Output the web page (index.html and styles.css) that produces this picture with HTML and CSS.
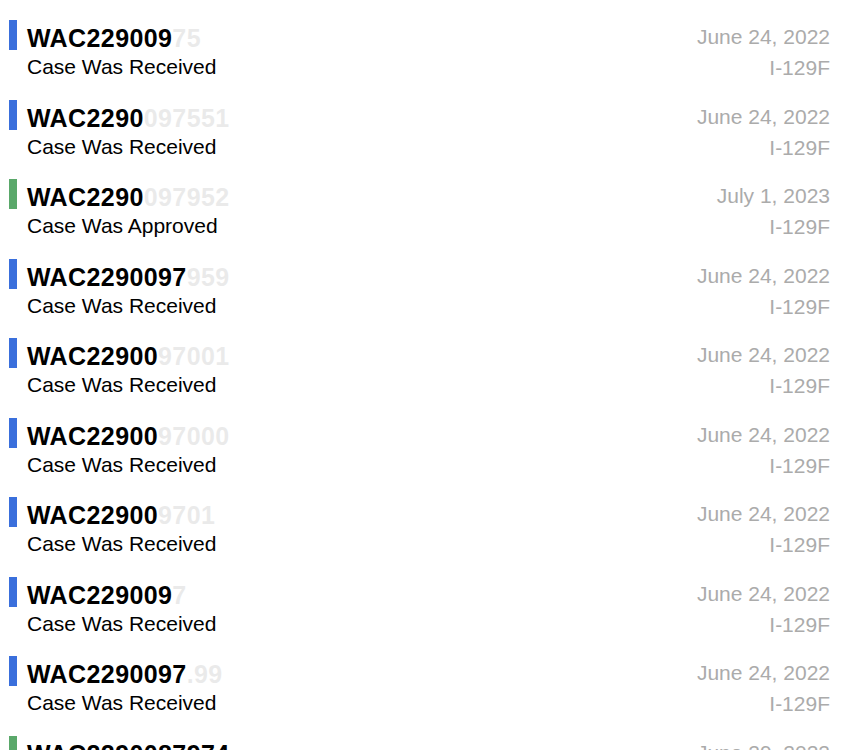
FILE: index.html
```html
<!DOCTYPE html>
<html lang="en">
<head>
    <meta charset="UTF-8">
    <meta name="viewport" content="width=device-width, initial-scale=1.0">
    <title>Cases</title>
    <link rel="stylesheet" href="styles.css">
</head>
<body>
    <ul class="case-list">
        <li class="case">
            <span class="bar received"></span>
            <div class="info">
                <div class="receipt">WAC229009<span class="hidden">75</span></div>
                <div class="status">Case Was Received</div>
            </div>
            <div class="meta">
                <div class="date">June 24, 2022</div>
                <div class="form">I-129F</div>
            </div>
        </li>
        <li class="case">
            <span class="bar received"></span>
            <div class="info">
                <div class="receipt">WAC2290<span class="hidden">097551</span></div>
                <div class="status">Case Was Received</div>
            </div>
            <div class="meta">
                <div class="date">June 24, 2022</div>
                <div class="form">I-129F</div>
            </div>
        </li>
        <li class="case">
            <span class="bar approved"></span>
            <div class="info">
                <div class="receipt">WAC2290<span class="hidden">097952</span></div>
                <div class="status">Case Was Approved</div>
            </div>
            <div class="meta">
                <div class="date">July 1, 2023</div>
                <div class="form">I-129F</div>
            </div>
        </li>
        <li class="case">
            <span class="bar received"></span>
            <div class="info">
                <div class="receipt">WAC2290097<span class="hidden">959</span></div>
                <div class="status">Case Was Received</div>
            </div>
            <div class="meta">
                <div class="date">June 24, 2022</div>
                <div class="form">I-129F</div>
            </div>
        </li>
        <li class="case">
            <span class="bar received"></span>
            <div class="info">
                <div class="receipt">WAC22900<span class="hidden">97001</span></div>
                <div class="status">Case Was Received</div>
            </div>
            <div class="meta">
                <div class="date">June 24, 2022</div>
                <div class="form">I-129F</div>
            </div>
        </li>
        <li class="case">
            <span class="bar received"></span>
            <div class="info">
                <div class="receipt">WAC22900<span class="hidden">97000</span></div>
                <div class="status">Case Was Received</div>
            </div>
            <div class="meta">
                <div class="date">June 24, 2022</div>
                <div class="form">I-129F</div>
            </div>
        </li>
        <li class="case">
            <span class="bar received"></span>
            <div class="info">
                <div class="receipt">WAC22900<span class="hidden">9701</span></div>
                <div class="status">Case Was Received</div>
            </div>
            <div class="meta">
                <div class="date">June 24, 2022</div>
                <div class="form">I-129F</div>
            </div>
        </li>
        <li class="case">
            <span class="bar received"></span>
            <div class="info">
                <div class="receipt">WAC229009<span class="hidden">7</span></div>
                <div class="status">Case Was Received</div>
            </div>
            <div class="meta">
                <div class="date">June 24, 2022</div>
                <div class="form">I-129F</div>
            </div>
        </li>
        <li class="case">
            <span class="bar received"></span>
            <div class="info">
                <div class="receipt">WAC2290097<span class="hidden">.99</span></div>
                <div class="status">Case Was Received</div>
            </div>
            <div class="meta">
                <div class="date">June 24, 2022</div>
                <div class="form">I-129F</div>
            </div>
        </li>
        <li class="case">
            <span class="bar approved"></span>
            <div class="info">
                <div class="receipt">WAC2290087974</div>
                <div class="status">Case Was Approved</div>
            </div>
            <div class="meta">
                <div class="date">June 29, 2022</div>
                <div class="form">I-129F</div>
            </div>
        </li>
    </ul>
</body>
</html>
```

FILE: styles.css
```css
body { margin: 0; background: #fff; font-family: "Liberation Sans", Arial, sans-serif; color: #000; overflow: hidden; }
.case-list { list-style: none; margin: 0; padding: 20px 18px 0 9px; }
.case { display: flex; height: 79.5px; }
.bar { width: 8px; height: 30px; margin-right: 10px; flex-shrink: 0; }
.bar.received { background: #3a6fdc; }
.bar.approved { background: #5aa86a; }
.info { flex: 1; }
.receipt { font-size: 25px; font-weight: bold; line-height: 28px; margin-top: 4px; letter-spacing: 0.4px; }
.receipt .hidden { color: #000; opacity: 0.08; }
.status { font-size: 21px; line-height: 26px; margin-top: 2px; }
.meta { text-align: right; color: #ababab; font-size: 21px; }
.date { line-height: 28px; margin-top: 3px; }
.form { line-height: 26px; margin-top: 4px; }
```
